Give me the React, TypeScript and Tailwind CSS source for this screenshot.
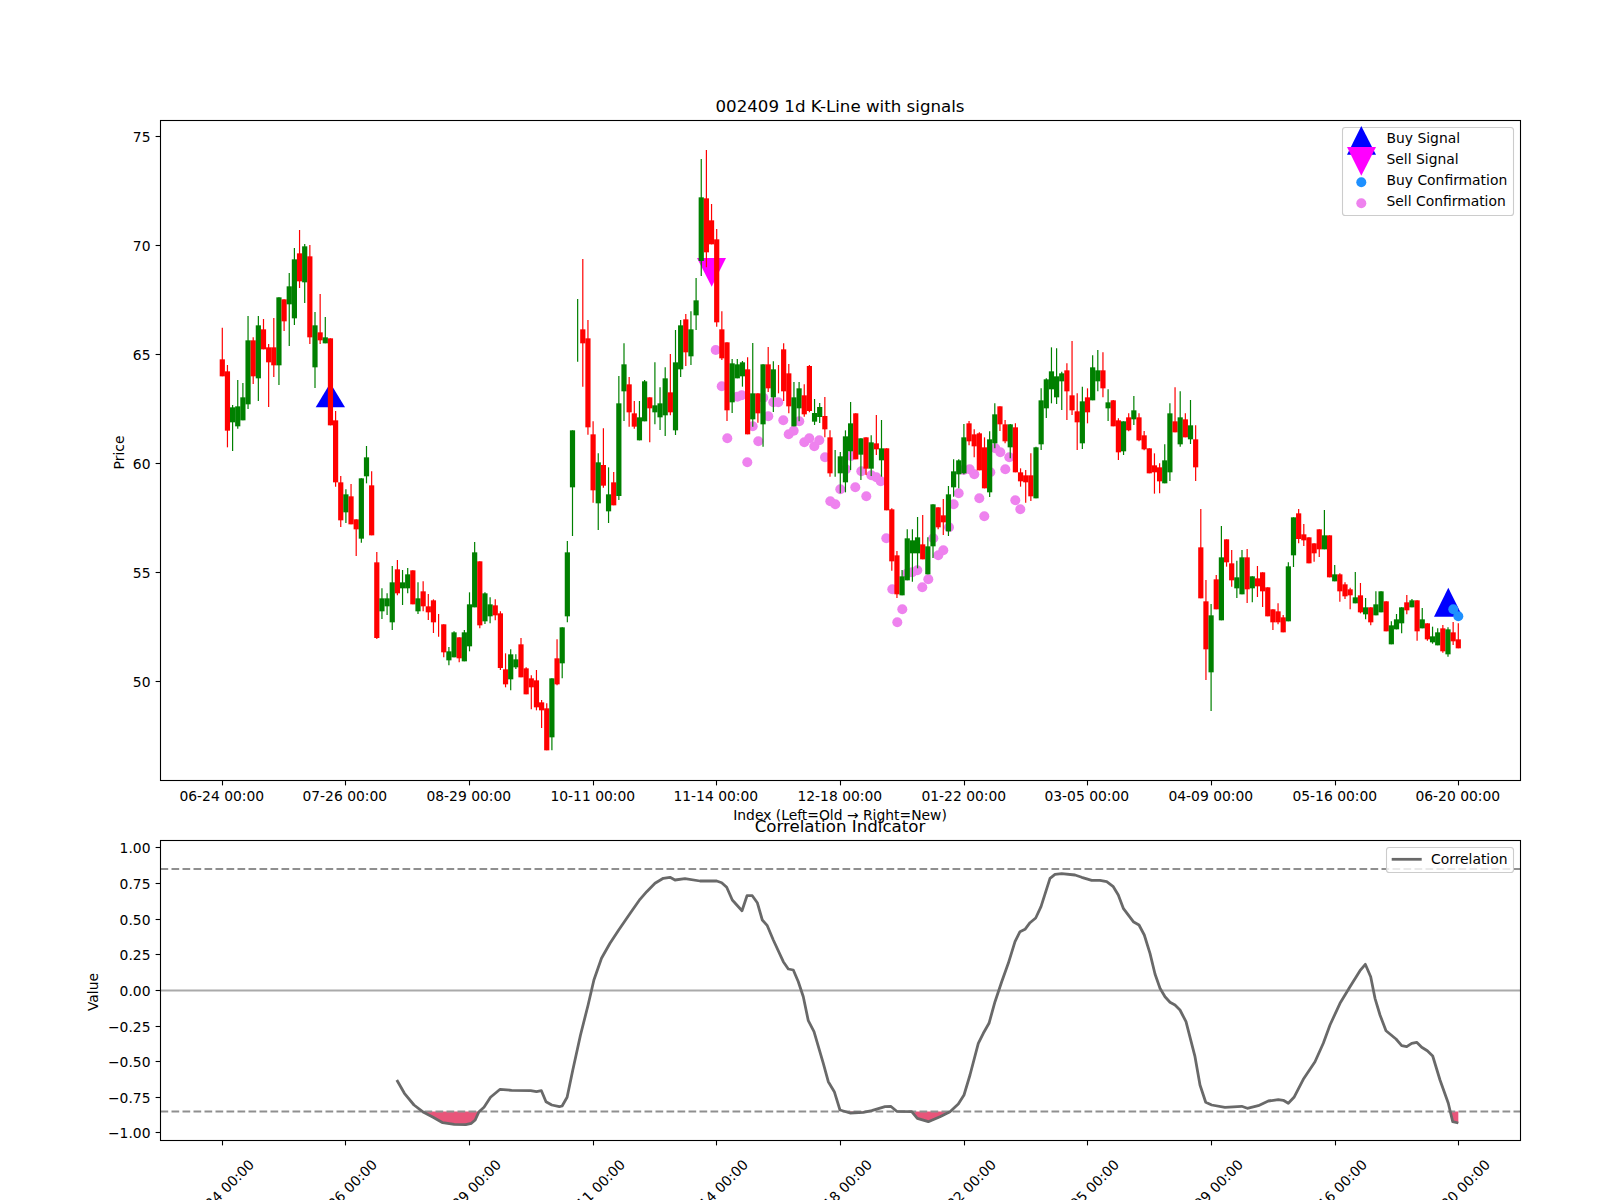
type Row = [string, number, number, number, number];
type Candle = { i: number; up: boolean; high: number; top: number; bottom: number; low: number };

// candles are read off the chart in 3x units, each block relative to its own y origin
const blocks: { y0: number; rows: Row[] }[] = [
  {
    y0: 120,
    rows: [
      ["r", 623, 718, 769, 769], ["r", 735, 754, 932, 982], ["g", 855, 862, 907, 993], ["g", 780, 859, 919, 926],
      ["g", 789, 832, 901, 901], ["g", 588, 661, 853, 867], ["r", 652, 661, 769, 792], ["g", 588, 616, 775, 843],
      ["r", 597, 628, 688, 688], ["r", 672, 682, 727, 861], ["r", 594, 682, 736, 771], ["g", 532, 532, 736, 795],
      ["r", 538, 538, 604, 633], ["g", 459, 499, 553, 678], ["g", 384, 418, 595, 615], ["r", 330, 400, 484, 504],
      ["g", 372, 379, 487, 549], ["r", 375, 409, 652, 672], ["g", 576, 616, 742, 804], ["r", 522, 637, 661, 672],
      ["g", 591, 652, 670, 670], ["r", 655, 655, 916, 916], ["r", 873, 901, 1087, 1100],
    ],
  },
  {
    y0: 440,
    rows: [
      ["r", 108, 127, 241, 261], ["g", 148, 163, 217, 249], ["r", 132, 169, 253, 253], ["r", 238, 238, 268, 348],
      ["g", 115, 115, 296, 308], ["g", 18, 52, 109, 130], ["r", 94, 136, 286, 286], ["r", 336, 367, 594, 597],
      ["g", 445, 475, 514, 537], ["g", 460, 475, 499, 525], ["g", 378, 427, 547, 570], ["r", 360, 388, 460, 466],
      ["g", 390, 427, 445, 495], ["g", 384, 403, 445, 460], ["r", 391, 391, 493, 493], ["g", 427, 475, 514, 522],
      ["r", 424, 454, 499, 514], ["r", 462, 499, 517, 540], ["r", 478, 481, 547, 579], ["r", 522, 522, 522, 590],
      ["r", 553, 553, 637, 652], ["g", 621, 634, 661, 676], ["g", 574, 577, 652, 652], ["r", 592, 592, 655, 667],
      ["g", 570, 577, 664, 664], ["g", 457, 493, 619, 634], ["g", 306, 337, 502, 502], ["r", 364, 364, 556, 565],
      ["g", 457, 460, 544, 552], ["g", 472, 493, 529, 550], ["r", 478, 496, 526, 541], ["r", 514, 520, 684, 690],
      ["r", 640, 688, 733, 742], ["g", 628, 643, 718, 751], ["g", 643, 658, 682, 687], ["r", 594, 613, 712, 712],
      ["r", 682, 685, 763, 763], ["r", 706, 715, 742, 808], ["r", 690, 721, 802, 811], ["r", 780, 787, 811, 864],
      ["r", 790, 805, 931, 931], ["g", 715, 715, 892, 931], ["r", 598, 655, 733, 736], ["g", 562, 562, 670, 715],
      ["g", 303, 337, 529, 547], ["g", -29, -29, 142, 288],
    ],
  },
  {
    y0: 240,
    rows: [
      ["g", 177, 177, 177, 365], ["r", 57, 268, 310, 440], ["r", 240, 295, 562, 584], ["r", 544, 583, 751, 788],
      ["g", 640, 667, 790, 870],
    ],
  },
  {
    y0: 130,
    rows: [
      ["r", 895, 1005, 1067, 1073], ["g", 1012, 1093, 1144, 1179], ["r", 1026, 1057, 1126, 1126], ["g", 738, 820, 1098, 1110],
      ["g", 640, 703, 784, 873], ["r", 741, 763, 847, 890], ["r", 813, 850, 890, 896], ["g", 813, 862, 931, 931],
      ["g", 750, 754, 874, 874], ["r", 802, 802, 835, 937], ["g", 697, 826, 847, 883], ["g", 772, 820, 862, 900],
      ["g", 712, 745, 856, 918], ["r", 672, 787, 847, 856], ["g", 600, 697, 901, 915], ["g", 570, 586, 718, 741],
      ["r", 552, 568, 667, 708], ["g", 544, 598, 679, 705], ["g", 444, 511, 556, 600], ["g", 87, 202, 393, 438],
      ["r", 60, 205, 367, 412], ["r", 222, 271, 343, 343], ["r", 297, 328, 577, 590], ["r", 544, 598, 685, 690],
      ["r", 637, 637, 841, 873], ["g", 687, 700, 817, 849], ["g", 687, 703, 745, 745], ["g", 693, 697, 739, 770],
      ["r", 682, 718, 913, 913], ["g", 639, 790, 868, 890], ["r", 790, 790, 850, 878], ["g", 703, 703, 883, 950],
      ["r", 651, 703, 775, 786], ["g", 694, 718, 802, 846], ["r", 705, 705, 705, 790], ["r", 640, 658, 784, 813],
      ["r", 702, 730, 829, 850], ["g", 756, 802, 889, 889], ["g", 756, 775, 835, 874],
    ],
  },
  {
    y0: 320,
    rows: [
      ["r", 193, 226, 283, 290], ["r", 135, 138, 273, 277], ["g", 237, 279, 305, 315], ["g", 249, 261, 291, 309],
      ["r", 231, 288, 328, 352], ["r", 331, 352, 460, 470], ["g", 390, 390, 390, 470], ["g", 396, 409, 460, 520],
      ["g", 331, 349, 487, 517], ["g", 246, 310, 394, 450], ["r", 280, 280, 418, 418], ["g", 355, 355, 404, 480],
      ["r", 352, 352, 446, 465], ["g", 346, 367, 446, 468], ["r", 285, 370, 388, 405], ["g", 300, 385, 421, 470],
      ["r", 385, 385, 571, 571], ["r", 565, 568, 724, 752], ["r", 693, 706, 823, 834], ["g", 750, 769, 826, 826],
      ["g", 628, 655, 781, 781], ["g", 628, 661, 700, 785], ["g", 591, 652, 700, 745], ["r", 585, 673, 718, 718],
      ["g", 652, 679, 763, 763], ["g", 553, 553, 679, 714], ["r", 562, 562, 622, 628], ["r", 537, 586, 607, 645],
      ["g", 498, 523, 634, 648], ["g", 418, 454, 502, 530], ["g", 418, 421, 463, 505], ["g", 312, 352, 460, 463],
      ["r", 303, 310, 364, 376], ["r", 328, 343, 379, 412], ["r", 337, 340, 451, 451], ["r", 352, 382, 505, 505],
      ["g", 334, 358, 517, 531], ["g", 250, 283, 370, 385], ["r", 259, 259, 313, 333], ["r", 300, 313, 364, 370],
      ["g", 312, 313, 382, 415], ["r", 310, 322, 457, 457], ["r", 445, 457, 484, 500], ["r", 450, 466, 487, 548],
      ["r", 400, 466, 529, 543], ["g", 380, 382, 535, 535], ["g", 205, 241, 373, 390], ["g", 175, 178, 265, 294],
      ["g", 82, 154, 208, 250], ["g", 85, 169, 232, 252], ["g", 155, 160, 184, 270], ["r", 130, 151, 214, 300],
      ["r", 63, 226, 271, 285], ["r", 220, 274, 307, 390], ["g", 200, 244, 370, 387], ["r", 205, 232, 277, 310],
      ["g", 106, 142, 241, 241], ["g", 90, 151, 184, 214], ["r", 97, 151, 205, 232], ["g", 208, 247, 265, 303],
      ["r", 240, 241, 319, 319], ["r", 295, 301, 397, 420], ["g", 304, 304, 394, 405], ["r", 280, 292, 331, 334],
      ["g", 228, 271, 298, 315], ["r", 280, 292, 361, 364], ["r", 333, 346, 388, 391], ["r", 385, 385, 460, 460],
      ["r", 400, 436, 457, 521], ["r", 430, 442, 484, 520], ["g", 373, 421, 490, 490], ["g", 250, 280, 457, 483],
      ["r", 202, 304, 337, 337], ["g", 214, 292, 373, 380], ["r", 280, 298, 352, 352], ["g", 240, 316, 358, 372],
      ["r", 316, 358, 442, 483],
    ],
  },
  {
    y0: 330,
    rows: [
      ["r", 537, 652, 805, 805], ["r", 750, 814, 958, 1050], ["g", 822, 856, 1027, 1143], ["r", 735, 748, 838, 838],
      ["g", 588, 682, 871, 871], ["r", 628, 628, 697, 710], ["r", 660, 700, 751, 770], ["g", 692, 742, 775, 804],
      ["g", 660, 682, 793, 793], ["r", 657, 682, 778, 819], ["g", 739, 739, 775, 817], ["r", 708, 745, 769, 801],
      ["r", 727, 727, 784, 831], ["r", 772, 772, 859, 859], ["r", 838, 838, 877, 900], ["r", 820, 844, 877, 883],
      ["r", 855, 862, 907, 907], ["g", 697, 709, 874, 874], ["g", 562, 562, 676, 711], ["r", 537, 550, 627, 640],
      ["r", 582, 613, 631, 648], ["r", 622, 622, 700, 700], ["r", 640, 640, 670, 695], ["r", 598, 598, 658, 681],
      ["g", 540, 616, 658, 658], ["r", 616, 616, 742, 742], ["g", 705, 733, 754, 754], ["r", 730, 733, 784, 815],
      ["r", 757, 763, 799, 807], ["r", 773, 778, 796, 838], ["g", 726, 802, 820, 820], ["r", 759, 796, 847, 850],
      ["g", 804, 832, 853, 868], ["r", 832, 832, 877, 886], ["g", 784, 823, 856, 856], ["g", 784, 784, 847, 847],
      ["r", 814, 814, 904, 904], ["g", 874, 886, 943, 943], ["g", 852, 868, 898, 898], ["g", 832, 832, 880, 910],
      ["r", 795, 817, 841, 853], ["g", 807, 811, 832, 832], ["r", 811, 811, 904, 932], ["g", 834, 868, 895, 895],
      ["r", 880, 880, 928, 932], ["g", 890, 919, 937, 941], ["g", 895, 907, 946, 946], ["r", 885, 895, 964, 968],
      ["g", 892, 898, 973, 980], ["r", 876, 907, 934, 945], ["r", 880, 928, 955, 955],
    ],
  },
];

const candles: Candle[] = blocks
  .flatMap((b) =>
    b.rows.map(([c, h, t, bo, l]) => ({
      up: c === "g",
      high: b.y0 + h / 3,
      top: b.y0 + t / 3,
      bottom: b.y0 + bo / 3,
      low: b.y0 + l / 3,
    }))
  )
  .map((c, i) => ({ ...c, i }));

const candleX = (i: number) => 222.3 + 5.15 * i;

const sellDots = [
  [715.7, 350], [721.7, 386.3], [727.3, 438.3], [747.3, 462.3], [737.3, 396.7], [741.7, 395.3], [752.7, 426.3],
  [758.3, 441.3], [763.3, 397.7], [768.3, 416.3], [773.3, 402.3], [778.3, 402.3], [783.3, 420.3], [788.7, 434.3],
  [793.7, 430.7], [799.3, 421.3], [804.3, 442.3], [809.3, 438.3], [814.3, 446.3], [819.3, 440.3], [825, 457.3],
  [830.3, 501.3], [835.3, 504.3], [840.3, 489.3], [846, 469.3], [851, 456], [855.3, 487.3], [861.3, 471.3],
  [866.3, 496.3], [871.3, 475.3], [876.3, 477.3], [880.7, 481.3], [886.3, 538.3], [892.3, 589.3], [897.3, 622.3],
  [902.3, 609.3], [907.3, 573.3], [912.3, 572.3], [917.3, 570.3], [922.3, 587.3], [928.3, 579.3], [933.3, 538.3],
  [938.3, 555.3], [943.3, 550.3], [949, 527.3], [953.7, 504.3], [958.7, 493.3], [963.7, 470], [969.7, 469.3],
  [974.3, 474.3], [979.3, 498.3], [984.3, 516.3], [990.3, 472.3], [995.3, 448.3], [1000.3, 452.3], [1005.3, 469.3],
  [1009.3, 457.3], [1015.3, 500.3], [1020.3, 509.3],
];

const corrLine = [
  [396.8, 1080], [404.4, 1093.3], [414, 1105], [423.6, 1112.3], [433.1, 1117.3], [442.7, 1122.7], [454.2, 1124.3],
  [465.7, 1124.7], [471.4, 1123.3], [475.2, 1120], [479, 1111.7], [484, 1107.3], [490.5, 1097.3], [500.1, 1089.3],
  [511.6, 1090.3], [530.7, 1090.7], [536.5, 1091.7], [541.4, 1090.7], [546, 1101.7], [551.8, 1105], [559.4, 1106.7],
  [562.1, 1106], [567.1, 1097.3], [572.8, 1070], [580.5, 1035], [588.1, 1005], [593.9, 980], [601.5, 958.3],
  [610, 943.3], [618.7, 930], [630.2, 913.3], [640, 899.3], [646.7, 891.7], [655, 883.3], [663.3, 878.3],
  [670, 877.3], [675, 880], [685, 878.7], [700, 881], [716.7, 881], [721.7, 882.7], [726.7, 887.3], [732.3, 900],
  [742, 910.7], [747, 895.7], [752.3, 895.7], [757.3, 902.7], [762.3, 920], [767.3, 925.7], [773.3, 940],
  [783.3, 961.7], [788.3, 969], [793.3, 970], [798.3, 981.7], [803.3, 996.7], [808.3, 1020.7], [814, 1031.7],
  [823.3, 1063.3], [828.3, 1081.7], [834.3, 1091.7], [840, 1110], [850, 1113], [863.3, 1112.3], [871.7, 1110.7],
  [885, 1106.7], [890.7, 1106.3], [896.7, 1111.3], [911.7, 1111.7], [917.3, 1118.3], [928.3, 1121.7], [940, 1116.7],
  [950, 1111.7], [958.3, 1104], [964, 1095], [970, 1075], [978.3, 1043.3], [983.3, 1033.3], [989, 1023.3],
  [995, 1001.7], [1001.7, 981.7], [1008.3, 963.3], [1015, 941.7], [1020, 931.7], [1025, 929.3], [1030, 922.7],
  [1035.7, 918], [1041, 906.7], [1050, 878.3], [1055, 874.3], [1061.7, 873.7], [1075, 875], [1081.7, 877.3],
  [1091.7, 880.3], [1100, 880.3], [1106.7, 881.7], [1113.3, 886.7], [1118.3, 895], [1123.3, 908.3], [1133.3, 921.7],
  [1139, 925], [1144.3, 935], [1150, 953.3], [1155, 974], [1160, 988.3], [1165, 996.7], [1170, 1002.3], [1175, 1005],
  [1180, 1010], [1186, 1021.7], [1195, 1056.7], [1200, 1085], [1205.7, 1102.3], [1211.7, 1105], [1225, 1107.3],
  [1241.7, 1106.3], [1247.3, 1108.3], [1258.3, 1105.7], [1268.3, 1101], [1278.3, 1099.7], [1283.3, 1100.3],
  [1288.3, 1103.3], [1294, 1097.3], [1303.3, 1079.3], [1315, 1061.7], [1323.3, 1043.3], [1330, 1025], [1340, 1003.3],
  [1350, 986.7], [1360, 970.7], [1365.3, 964.3], [1370.7, 976.7], [1375, 998.3], [1380, 1015], [1386, 1030.7],
  [1396, 1039], [1401.7, 1045.7], [1406.7, 1046.7], [1411.7, 1043.3], [1416.7, 1042.3], [1421.7, 1047.3],
  [1427.3, 1050.7], [1432.7, 1056], [1440, 1080], [1448.3, 1103.3], [1452.7, 1121.7], [1458.3, 1123],
];

const toPoints = (pts: number[][]) => pts.map((p) => p.join(",")).join(" ");

const fills = [
  [[422, 1111.4], [433.1, 1117.3], [442.7, 1122.7], [454.2, 1124.3], [465.7, 1124.7], [471.4, 1123.3], [475.2, 1120], [479, 1111.4]],
  [[843, 1111.4], [850, 1113], [863.3, 1112.3], [868, 1111.4]],
  [[911.7, 1111.4], [917.3, 1118.3], [928.3, 1121.7], [940, 1116.7], [950, 1111.4]],
  [[1450.5, 1111.4], [1458.3, 1111.4], [1458.3, 1123], [1452.7, 1121.7]],
];

const xTicks = [
  "06-24 00:00", "07-26 00:00", "08-29 00:00", "10-11 00:00", "11-14 00:00", "12-18 00:00",
  "01-22 00:00", "03-05 00:00", "04-09 00:00", "05-16 00:00", "06-20 00:00",
];
const xTickAt = [222.5, 345.5, 469.5, 593.5, 716.5, 840.5, 964.5, 1087.5, 1211.5, 1335.5, 1458.5];

const priceTicks: [string, number][] = [["75", 136.5], ["70", 245.5], ["65", 354.5], ["60", 463.5], ["55", 572.5], ["50", 681.5]];
const corrTicks: [string, number][] = [
  ["1.00", 847.5], ["0.75", 883.5], ["0.50", 919.5], ["0.25", 954.5], ["0.00", 990.5],
  ["−0.25", 1026.5], ["−0.50", 1061.5], ["−0.75", 1097.5], ["−1.00", 1132.5],
];

function Axes({ top, bottom }: { top: number; bottom: number }) {
  return <rect x={160.5} y={top} width={1360} height={bottom - top} fill="none" stroke="#000" strokeWidth={1.1} />;
}

function YTicks({ ticks }: { ticks: [string, number][] }) {
  return (
    <>
      {ticks.map(([label, y]) => (
        <g key={label}>
          <line x1={155.6} x2={160.5} y1={y} y2={y} stroke="#000" strokeWidth={1.1} />
          <text x={150.5} y={y + 5.5} textAnchor="end">{label}</text>
        </g>
      ))}
    </>
  );
}

export default function App() {
  return (
    <div className="w-[1600px] h-[1200px] overflow-hidden bg-white">
      <svg width={1600} height={1200} className="block font-['DejaVu_Sans',sans-serif] text-[13.89px] fill-black">
        {/* price panel */}
        <text x={840} y={112} textAnchor="middle" className="text-[16.67px]">002409 1d K-Line with signals</text>
        <polygon points="330.3,383 315.7,407.3 345,407.3" fill="#0000ff" />
        <polygon points="697,258 726,258 711.7,286.7" fill="#ff00ff" />
        <polygon points="1448.3,587.7 1434,616.7 1462.7,616.7" fill="#0000ff" />
        {sellDots.map(([x, y], i) => (
          <circle key={i} cx={x} cy={y} r={5} fill="#ee82ee" />
        ))}
        <circle cx={1453.3} cy={609.3} r={5} fill="#1e90ff" />
        <circle cx={1458.3} cy={616.3} r={5} fill="#1e90ff" />
        {candles.map((c) => {
          const color = c.up ? "#008000" : "#ff0000";
          const x = candleX(c.i);
          return (
            <g key={c.i}>
              <line x1={x} x2={x} y1={c.high} y2={c.low} stroke={color} strokeWidth={1.2} />
              {c.bottom > c.top && <rect x={x - 2.6} y={c.top} width={5.2} height={c.bottom - c.top} fill={color} />}
            </g>
          );
        })}
        <Axes top={120.5} bottom={780.5} />
        <YTicks ticks={priceTicks} />
        {xTicks.map((label, i) => (
          <g key={label}>
            <line x1={xTickAt[i]} x2={xTickAt[i]} y1={780.5} y2={785.4} stroke="#000" strokeWidth={1.1} />
            <text x={xTickAt[i] - 0.7} y={801} textAnchor="middle">{label}</text>
          </g>
        ))}
        <text transform="translate(124 452.5) rotate(-90)" textAnchor="middle">Price</text>
        <text x={840} y={820} textAnchor="middle">Index (Left=Old → Right=New)</text>

        {/* legend of the price panel */}
        <rect x={1342.5} y={127.5} width={171} height={88} rx={2.8} fill="#fff" fillOpacity={0.8} stroke="#ccc" strokeWidth={1.1} />
        <polygon points="1361.3,126 1347,154.7 1376,154.7" fill="#0000ff" />
        <polygon points="1347,147 1376,147 1361.3,175.7" fill="#ff00ff" />
        <circle cx={1361.3} cy={182.3} r={5} fill="#1e90ff" />
        <circle cx={1361.3} cy={203.3} r={5} fill="#ee82ee" />
        <text x={1386.5} y={143.3}>Buy Signal</text>
        <text x={1386.5} y={164.3}>Sell Signal</text>
        <text x={1386.5} y={185.3}>Buy Confirmation</text>
        <text x={1386.5} y={206.3}>Sell Confirmation</text>

        {/* correlation panel */}
        <text x={840} y={832} textAnchor="middle" className="text-[16.67px]">Correlation Indicator</text>
        {fills.map((f, i) => (
          <polygon key={i} points={toPoints(f)} fill="#e8557a" />
        ))}
        <line x1={160.5} x2={1520.5} y1={990.5} y2={990.5} stroke="#aaaaaa" strokeWidth={2} />
        <line x1={160.5} x2={1520.5} y1={869} y2={869} stroke="#8f8f8f" strokeWidth={2} strokeDasharray="7.7 3.3" />
        <line x1={160.5} x2={1520.5} y1={1111.4} y2={1111.4} stroke="#8f8f8f" strokeWidth={2} strokeDasharray="7.7 3.3" />
        <polyline points={toPoints(corrLine)} fill="none" stroke="#696969" strokeWidth={2.78} strokeLinejoin="round" />
        <Axes top={840.5} bottom={1140.5} />
        <YTicks ticks={corrTicks} />
        {xTicks.map((label, i) => (
          <g key={label}>
            <line x1={xTickAt[i]} x2={xTickAt[i]} y1={1140.5} y2={1145.4} stroke="#000" strokeWidth={1.1} />
            <text transform={`translate(${xTickAt[i] - 1} 1192) rotate(-45)`} y={5} textAnchor="middle">{label}</text>
          </g>
        ))}
        <text transform="translate(98 992) rotate(-90)" textAnchor="middle">Value</text>
        <rect x={1386.5} y={847.5} width={127} height={25} rx={2.8} fill="#fff" fillOpacity={0.8} stroke="#ccc" strokeWidth={1.1} />
        <line x1={1391.7} x2={1421.7} y1={859.3} y2={859.3} stroke="#696969" strokeWidth={2.78} />
        <text x={1431} y={864}>Correlation</text>
      </svg>
    </div>
  );
}
